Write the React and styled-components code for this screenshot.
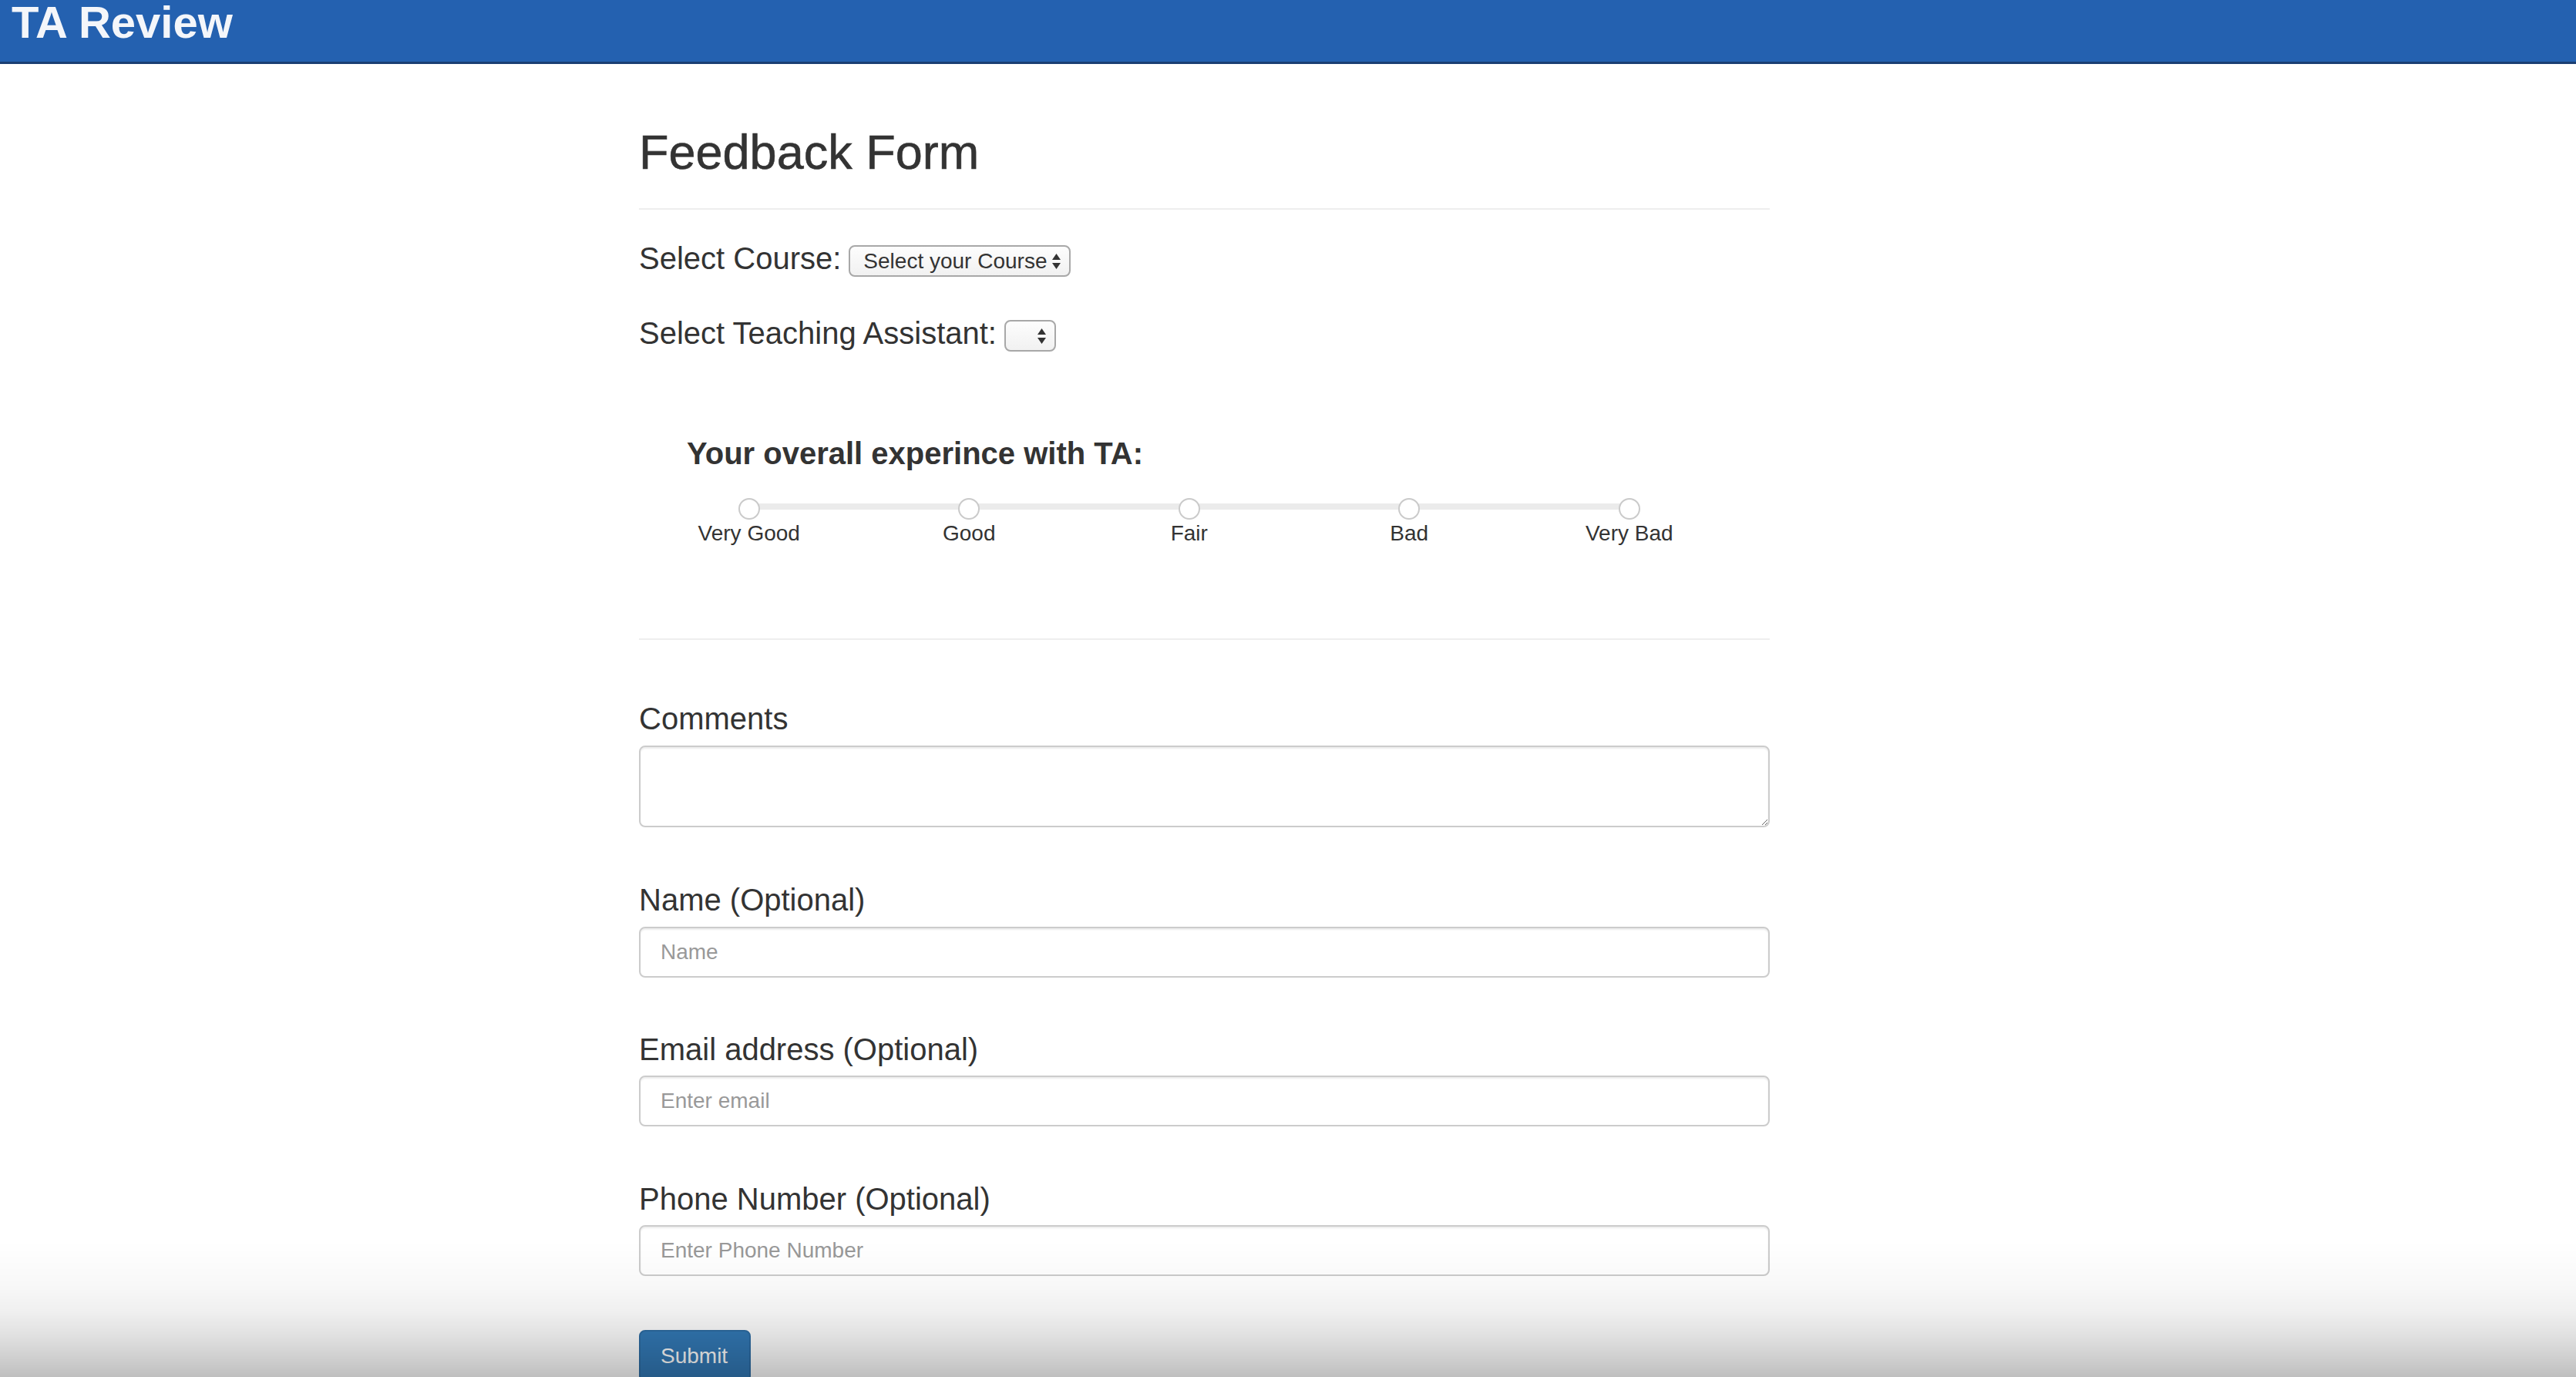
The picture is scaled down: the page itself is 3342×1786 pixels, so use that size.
import React from "react";
import styled, { createGlobalStyle } from "styled-components";

const GlobalStyle = createGlobalStyle`
  html, body {
    margin: 0;
    padding: 0;
    background: #ffffff;
    overflow: hidden;
  }
  body {
    font-family: "Liberation Sans", Arial, Helvetica, sans-serif;
    color: #333333;
  }
  * {
    box-sizing: border-box;
  }
`;

// NAVBAR
const NavBar = styled.header`
  height: 83px;
  background-color: #2461b0;
  border-bottom: 3px solid #1b3f73;
  padding-left: 15px;
`;

const Brand = styled.div`
  font-size: 58px;
  line-height: 58px;
  font-weight: 700;
  color: #f4f6fa;
`;
// END NAVBAR

const Main = styled.main`
  width: 1467px;
  margin-left: 829px;
`;

const Title = styled.h1`
  margin: 79px 0 0;
  font-size: 63px;
  line-height: 70px;
  font-weight: 500;
  color: #333;
  -webkit-text-stroke: 0.6px #333;
`;

const Divider = styled.hr`
  margin: ${(p) => p.$top}px 0 0;
  height: 2px;
  border: none;
  background: #eeeeee;
`;

// SELECTS
const SelectRow = styled.div`
  display: flex;
  align-items: center;
  gap: 10px;
  margin-top: ${(p) => p.$top}px;
`;

const SelectLabel = styled.span`
  font-size: 40px;
  line-height: 40px;
  padding-bottom: 2px;
`;

const SelectBox = styled.div`
  display: flex;
  align-items: center;
  justify-content: space-between;
  width: ${(p) => p.$width}px;
  height: 41px;
  margin-top: 6px;
  padding: 0 10px 0 17px;
  border: 2px solid #a8a8a8;
  border-radius: 8px;
  background: linear-gradient(#fdfdfd, #f1f1f1);
  font-size: 28px;
  color: #333;
`;

const Arrows = () => (
  <svg width="13" height="22" viewBox="0 0 13 22">
    <path d="M1 9 L12 9 L6.5 1 Z" fill="#333" />
    <path d="M1 13 L12 13 L6.5 21 Z" fill="#333" />
  </svg>
);
// END SELECTS

// RATING
const RatingTitle = styled.h4`
  margin: 108px 0 0;
  padding-left: 62px;
  font-size: 40px;
  line-height: 48px;
  font-weight: 700;
  color: #333;
`;

const Scale = styled.div`
  position: relative;
  display: grid;
  grid-template-columns: repeat(5, 285.5px);
  width: 1427.5px;
  margin-top: 34px;
`;

const Track = styled.div`
  position: absolute;
  left: 142.75px;
  right: 142.75px;
  top: 7px;
  height: 8px;
  background: #ebebeb;
`;

const Option = styled.label`
  position: relative;
  display: flex;
  flex-direction: column;
  align-items: center;
`;

const Dot = styled.span`
  width: 28px;
  height: 28px;
  border-radius: 50%;
  border: 2px solid #cacaca;
  background: #ffffff;
`;

const OptionLabel = styled.span`
  margin-top: 2px;
  font-size: 28px;
  line-height: 32px;
  color: #333;
`;
// END RATING

// FIELDS
const Field = styled.div`
  display: flex;
  flex-direction: column;
  gap: ${(p) => p.$gap || 10}px;
  margin-top: ${(p) => p.$top}px;
`;

const FieldLabel = styled.label`
  font-size: 40px;
  line-height: 48px;
  color: #333;
`;

const TextArea = styled.textarea`
  display: block;
  width: 100%;
  height: 106px;
  border: 2px solid #cccccc;
  border-radius: 8px;
  box-shadow: inset 0 2px 2px rgba(0, 0, 0, 0.075);
  font-family: inherit;
  font-size: 28px;
  padding: 12px 26px;
`;

const Input = styled.input`
  display: block;
  width: 100%;
  height: 66px;
  border: 2px solid #cccccc;
  border-radius: 8px;
  box-shadow: inset 0 2px 2px rgba(0, 0, 0, 0.075);
  font-family: inherit;
  font-size: 28px;
  padding: 0 26px;
  color: #555;
  &::placeholder {
    color: #999999;
  }
`;

const SubmitButton = styled.button`
  display: block;
  height: 68px;
  margin-top: 70px;
  padding: 0 28px 0 26px;
  border: 2px solid #2e6da4;
  border-radius: 8px;
  background: #337ab7;
  color: #ffffff;
  font-family: inherit;
  font-size: 28px;
`;
// END FIELDS

const Vignette = styled.div`
  position: fixed;
  left: 0;
  right: 0;
  bottom: 0;
  height: 176px;
  pointer-events: none;
  background: linear-gradient(
    to bottom,
    rgba(0, 0, 0, 0) 0%,
    rgba(0, 0, 0, 0.027) 32%,
    rgba(0, 0, 0, 0.059) 51%,
    rgba(0, 0, 0, 0.122) 70%,
    rgba(0, 0, 0, 0.184) 85%,
    rgba(0, 0, 0, 0.25) 100%
  );
`;

const ratings = ["Very Good", "Good", "Fair", "Bad", "Very Bad"];

const App = () => {
  return (
    <>
      <GlobalStyle />
      <NavBar>
        <Brand>TA Review</Brand>
      </NavBar>
      <Main>
        <Title>Feedback Form</Title>
        <Divider $top={38} />

        <SelectRow $top={40}>
          <SelectLabel>Select Course:</SelectLabel>
          <SelectBox $width={288}>
            <span>Select your Course</span>
            <Arrows />
          </SelectBox>
        </SelectRow>
        <SelectRow $top={50}>
          <SelectLabel>Select Teaching Assistant:</SelectLabel>
          <SelectBox $width={67}>
            <span />
            <Arrows />
          </SelectBox>
        </SelectRow>

        <RatingTitle>Your overall experince with TA:</RatingTitle>
        <Scale>
          <Track />
          {ratings.map((r) => (
            <Option key={r}>
              <Dot />
              <OptionLabel>{r}</OptionLabel>
            </Option>
          ))}
        </Scale>
        <Divider $top={120} />

        <Field $top={78} $gap={11}>
          <FieldLabel>Comments</FieldLabel>
          <TextArea />
        </Field>
        <Field $top={70} $gap={11}>
          <FieldLabel>Name (Optional)</FieldLabel>
          <Input placeholder="Name" />
        </Field>
        <Field $top={69}>
          <FieldLabel>Email address (Optional)</FieldLabel>
          <Input placeholder="Enter email" />
        </Field>
        <Field $top={70}>
          <FieldLabel>Phone Number (Optional)</FieldLabel>
          <Input placeholder="Enter Phone Number" />
        </Field>
        <SubmitButton>Submit</SubmitButton>
      </Main>
      <Vignette />
    </>
  );
};

export default App;
